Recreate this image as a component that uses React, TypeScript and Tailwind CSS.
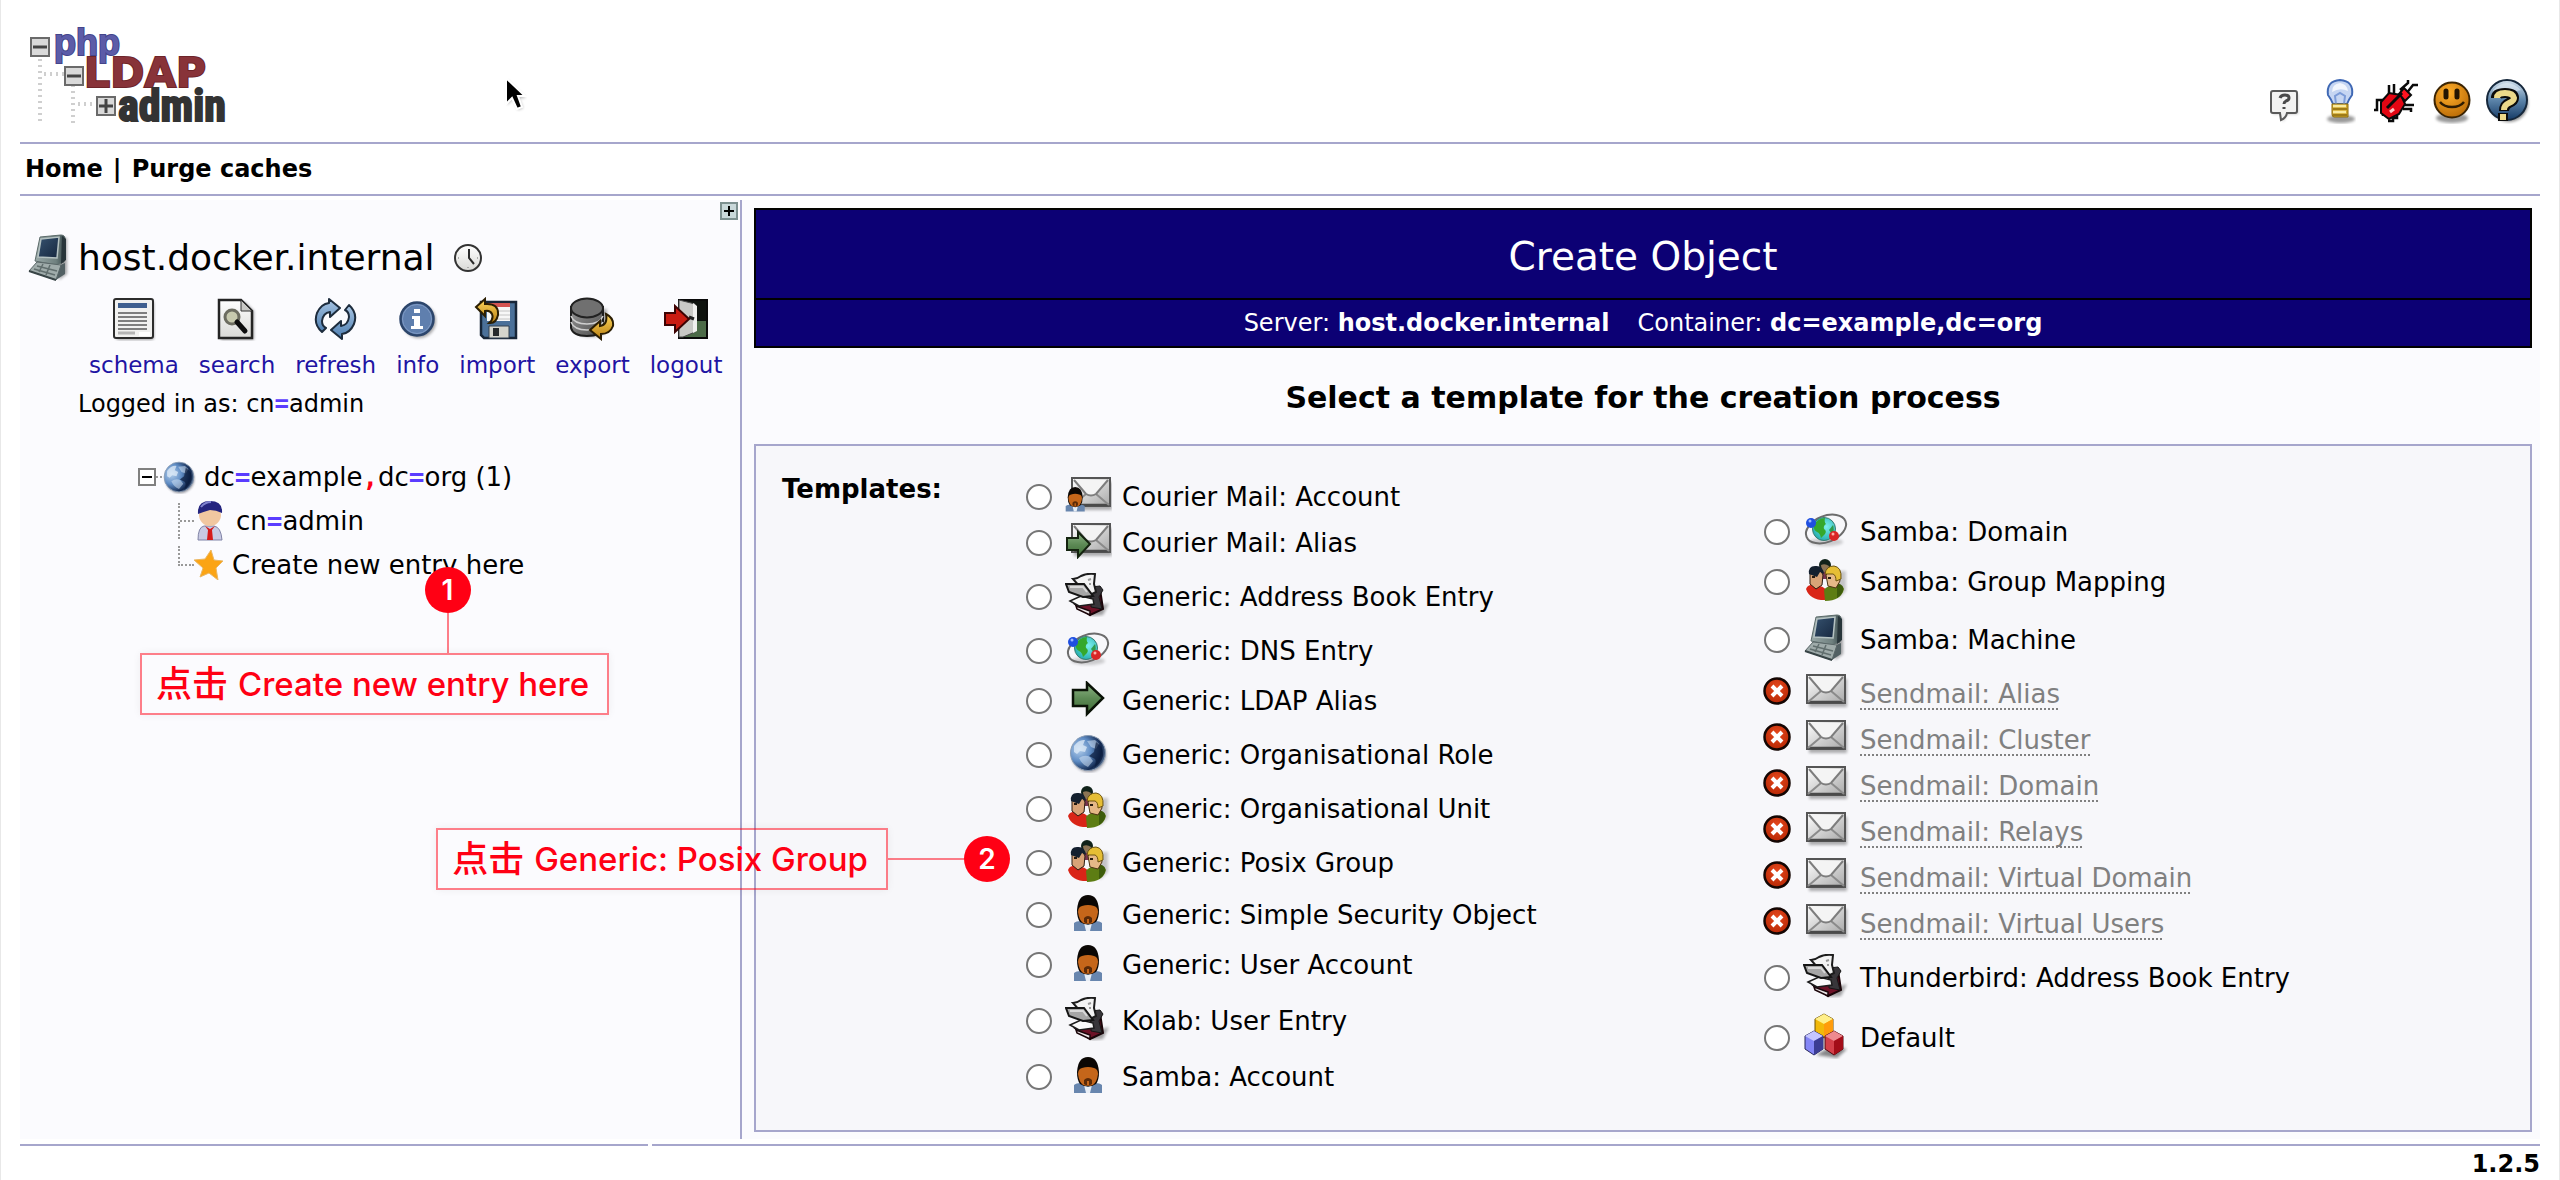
import type { ReactNode } from "react";

function Defs() {
  return (
    <svg width="0" height="0" className="absolute" aria-hidden="true">
      <defs>
        <linearGradient id="mailBody" x1="0" y1="0" x2="1" y2="1">
          <stop offset="0" stopColor="#fff" />
          <stop offset="1" stopColor="#a8a8a8" />
        </linearGradient>
        <linearGradient id="green" x1="0" y1="0" x2="0" y2="1">
          <stop offset="0" stopColor="#8fb586" />
          <stop offset="0.5" stopColor="#5d8a55" />
          <stop offset="1" stopColor="#3d6b35" />
        </linearGradient>
        <radialGradient id="earth" cx="0.25" cy="0.4" r="0.85">
          <stop offset="0" stopColor="#b4cfec" />
          <stop offset="0.4" stopColor="#5f8cc4" />
          <stop offset="0.75" stopColor="#12284f" />
          <stop offset="1" stopColor="#7f9ab8" />
        </radialGradient>
        <radialGradient id="teal" cx="0.6" cy="0.4" r="0.7">
          <stop offset="0" stopColor="#7df0ee" />
          <stop offset="1" stopColor="#1ba7a8" />
        </radialGradient>
        <radialGradient id="redDot" cx="0.5" cy="0.35" r="0.65">
          <stop offset="0" stopColor="#e5481c" />
          <stop offset="1" stopColor="#b82805" />
        </radialGradient>
        <linearGradient id="screen" x1="0" y1="0" x2="1" y2="1">
          <stop offset="0" stopColor="#36526f" />
          <stop offset="1" stopColor="#16273f" />
        </linearGradient>
        <linearGradient id="metal" x1="0" y1="0" x2="1" y2="0">
          <stop offset="0" stopColor="#9aa9a8" />
          <stop offset="0.7" stopColor="#6f807f" />
          <stop offset="1" stopColor="#37474a" />
        </linearGradient>
        <linearGradient id="blueArrow" x1="0" y1="0" x2="0" y2="1">
          <stop offset="0" stopColor="#a9c6e4" />
          <stop offset="1" stopColor="#4c7db0" />
        </linearGradient>
        <linearGradient id="gold" x1="0" y1="0" x2="0" y2="1">
          <stop offset="0" stopColor="#ffd75e" />
          <stop offset="1" stopColor="#b97f10" />
        </linearGradient>
        <linearGradient id="paper" x1="0" y1="0" x2="0" y2="1">
          <stop offset="0" stopColor="#ffffff" />
          <stop offset="1" stopColor="#d9d9d6" />
        </linearGradient>
        <radialGradient id="smile" cx="0.4" cy="0.3" r="0.75">
          <stop offset="0" stopColor="#ffae2a" />
          <stop offset="1" stopColor="#b96a06" />
        </radialGradient>
        <linearGradient id="helpBlue" x1="0" y1="0" x2="0" y2="1">
          <stop offset="0" stopColor="#d4e2ee" />
          <stop offset="0.5" stopColor="#5d85aa" />
          <stop offset="1" stopColor="#153a66" />
        </linearGradient>
        <linearGradient id="disk" x1="0" y1="0" x2="1" y2="1">
          <stop offset="0" stopColor="#9a9a9a" />
          <stop offset="1" stopColor="#4b4b4b" />
        </linearGradient>
        <filter id="soft" x="-30%" y="-30%" width="160%" height="160%">
          <feGaussianBlur stdDeviation="1.5" />
        </filter>
      </defs>
    </svg>
  );
}

type SvgProps = { w: number; h: number; children: ReactNode };
const Svg = ({ w, h, children }: SvgProps) => (
  <svg width={w} height={h} viewBox={`0 0 ${w} ${h}`} className="shrink-0" aria-hidden="true">
    {children}
  </svg>
);

const Envelope = ({ x }: { x: number }) => (
  <g transform={`translate(${x} 0)`}>
    <rect x="3" y="5" width="38" height="28" fill="#000" opacity="0.3" filter="url(#soft)" />
    <rect x="1" y="1" width="38" height="28" fill="url(#mailBody)" stroke="#555" strokeWidth="2" />
    <path d="M2 28h36" stroke="#4a4a4a" strokeWidth="2.5" />
    <path d="M2 28 15 17M38 28 25 17" stroke="#8b8b8b" strokeWidth="2" />
    <path d="M3 3 15 17q5 3 10 0L37 3" fill="#f4f4f4" stroke="#7d7d7d" strokeWidth="2" />
  </g>
);

const MailIcon = () => (
  <Svg w={48} h={36}>
    <Envelope x={4} />
  </Svg>
);

const Person = () => (
  <>
    <path d="M1 36v-8q2-2 7-2h14q5 0 7 2v8z" fill="#6886ae" />
    <path d="m11 28 4 2 4-2-2 8h-4z" fill="#e8eef6" />
    <path d="M4 15Q5 0 15 0t11 15q0 8-3 12-8 5-16 0-3-4-3-12z" fill="#0b0704" />
    <path d="M5 17q0-5 4-6 6-2 12 0 4 1 4 6-1 8-5 11-5 2-10 0-4-3-5-11z" fill="#c5661a" />
    <path d="M11 27v-4q4-4 8 0v4q-4 3-8 0z" fill="#5a2a08" />
    <path d="M14 24h2v4h-2z" fill="#c5661a" />
  </>
);

const UserIcon = () => (
  <Svg w={30} h={36}>
    <Person />
  </Svg>
);

const MailUserIcon = () => (
  <Svg w={48} h={36}>
    <Envelope x={7} />
    <g transform="translate(1 10) scale(0.68)">
      <Person />
    </g>
  </Svg>
);

const arrowPath = "M2 9h14V2l16 15-16 16v-8H2z";

const MailArrowIcon = () => (
  <Svg w={48} h={36}>
    <Envelope x={7} />
    <path d="M3 15h11V9l12 12-12 13v-7H3z" fill="url(#green)" stroke="#14230f" strokeWidth="2" />
  </Svg>
);

const ArrowIcon = () => (
  <Svg w={34} h={36}>
    <path d={arrowPath} fill="url(#green)" stroke="#0a1206" strokeWidth="2.5" />
  </Svg>
);

const BookIcon = () => (
  <Svg w={46} h={44}>
    <path d="M26 36l18-6-6 12-12 1z" fill="#000" opacity="0.35" filter="url(#soft)" />
    <path d="M10 31l16-6 9-9 3 20-13 6z" fill="#6d1227" stroke="#1a0509" strokeWidth="2" />
    <path d="M11 33l14 5v4L12 36z" fill="#e9e3e4" stroke="#1a0509" strokeWidth="1.5" />
    <path d="M26 14l9-1 3 4-4 7 3 12-11-2z" fill="#38363a" stroke="#151515" />
    <path d="M5 28 16 23l12 3 1 5-15 2z" fill="#fafafa" stroke="#1c1c1c" strokeWidth="1.5" />
    <path d="M8 6q4 0 8-3 6-3 14-2l-1 10 2 8-8 4z" fill="#f3f3f3" stroke="#1c1c1c" strokeWidth="2" />
    <path d="m23 7 3-1M24 11h2" stroke="#999" strokeWidth="2" />
    <path d="M1 11h18l9 12-10 1-14-5z" fill="#a6a6a6" stroke="#151515" strokeWidth="2" />
    <path d="M5 14h13l4 5" fill="none" stroke="#d8d8d8" strokeWidth="2" />
  </Svg>
);

const OrbitIcon = () => (
  <Svg w={46} h={36}>
    <ellipse cx="23" cy="30" rx="17" ry="4" fill="#000" opacity="0.18" filter="url(#soft)" />
    <ellipse cx="23" cy="17" rx="21" ry="13" transform="rotate(-22 23 17)" fill="none" stroke="#6c6c6c" strokeWidth="2" />
    <circle cx="21" cy="17" r="11.5" fill="url(#teal)" stroke="#3a7a70" />
    <path d="M11 13q4-7 11-7-1 4 1 6-3 2-2 5 3 2 1 5l-4 4q-1-5-4-6-4-2-3-7z" fill="#35a82c" />
    <path d="M30 13q2 5-1 9l-3-4z" fill="#2f9c4b" />
    <circle cx="8" cy="11" r="5" fill="#1f4fe0" />
    <circle cx="7" cy="9" r="1.5" fill="#9db8ff" />
    <circle cx="31" cy="24" r="5" fill="#d92626" />
    <circle cx="30" cy="22" r="1.5" fill="#ffb0a8" />
  </Svg>
);

const GlobeIcon = ({ size = 40 }: { size?: number }) => (
  <svg width={size} height={size} viewBox="0 0 40 40" className="shrink-0" aria-hidden="true">
    <circle cx="21" cy="22" r="17" fill="#223" opacity="0.45" filter="url(#soft)" />
    <circle cx="20" cy="20" r="17.5" fill="url(#earth)" stroke="#8b9db3" />
    <path d="M6 13q5-7 11-6l-2 5 4 2-2 5-5-1-3 3-3-2z" fill="#e0ecf8" opacity="0.75" />
    <path d="M11 25q6-4 11-1l3 4-5 6q-6-2-9-9zM19 8l8-1 4 4-3 5-5-2z" fill="#cfe0f2" opacity="0.55" />
    <path d="M28 9q8 5 7 14-2 8-9 12 3-6 1-9l-6-3 5-4z" fill="#0a1b3c" opacity="0.7" />
  </svg>
);

const GroupIcon = () => (
  <Svg w={44} h={42}>
    <path d="M30 12h12v20l-8 8z" fill="#000" opacity="0.2" filter="url(#soft)" />
    <circle cx="21" cy="6" r="6" fill="#10221a" />
    <path d="M14 14q7-10 14 0v6H14z" fill="#7b3552" />
    <path d="M17 6q4-2 8 1l-1 6h-6z" fill="#8b7455" />
    <path d="M2 30q2-5 9-4 9 1 11 5l1 10Q6 42 2 30z" fill="#d92517" />
    <path d="M40 30q-2-5-9-4-9 1-11 5l1 11q16 0 19-12z" fill="#5d7d13" />
    <path d="M33 24q8 2 6 8-2 5-6 7z" fill="#3d5c0b" />
    <path d="M6 12q10-5 13 4l-1 10-6 4-6-5z" fill="#d8a377" stroke="#2b1c12" />
    <path d="M5 15q-1-8 6-8 8-1 9 8l-4-2-3 5z" fill="#14202f" />
    <path d="M22 16q5-7 13 0l1 6-4 7-8-2z" fill="#e5b887" stroke="#4a3312" />
    <path d="M21 15q1-8 9-8 8 1 7 13l-5 2q0-6-3-7z" fill="#e6be35" stroke="#6b5310" />
    <path d="M8 18h3M24 19h3" stroke="#241a10" strokeWidth="2" />
  </Svg>
);

const ComputerIcon = () => (
  <Svg w={44} h={48}>
    <path d="M33 4h6v36l-8 6z" fill="#000" opacity="0.35" filter="url(#soft)" />
    <path d="M12 3 33 1q5 0 4 6l-1 21-8 3-21-4z" fill="url(#metal)" stroke="#5c6b6a" />
    <path d="m34 2 4 3v21l-5 4z" fill="#28353a" />
    <path d="m13 5 18-2-2 21-19-1z" fill="url(#screen)" stroke="#b5c2c2" strokeWidth="1.5" />
    <path d="m8 29 22 3 7-3v11l-9 6-8-2z" fill="#526063" />
    <path d="m1 37 8-9 24 3-5 15z" fill="#9fabaa" stroke="#596667" />
    <path d="m6 35 21 6M9 32l20 5M15 30l-4 8M22 31l-4 10" stroke="#616e6e" strokeWidth="1.5" />
    <path d="m1 37 27 9" stroke="#384446" strokeWidth="2" />
  </Svg>
);

const CubesIcon = () => (
  <Svg w={44} h={46}>
    <path d="M12 42 26 34l17 2-10 9z" fill="#000" opacity="0.45" filter="url(#soft)" />
    <path d="m20 1 9 5v13l-9 6-9-6V6z" fill="#f2b90a" stroke="#6f5304" />
    <path d="m20 1 9 5-9 5-9-5z" fill="#ffef8a" />
    <path d="M20 11v14l9-6V6z" fill="#ff9c0c" />
    <path d="m10 18 9 5v13l-9 6-9-6V23z" fill="#8486f6" stroke="#26265a" />
    <path d="m10 18 9 5-9 5-9-5z" fill="#c5c6ff" />
    <path d="M10 28v14l9-6V23z" fill="#3c3d94" />
    <path d="m30 18 9 5v13l-9 6-9-6V23z" fill="#d4404a" stroke="#4d070d" />
    <path d="m30 18 9 5-9 5-9-5z" fill="#ee8a8f" />
    <path d="M30 28v14l9-6V23z" fill="#a30d18" />
  </Svg>
);

const ErrorIcon = () => (
  <Svg w={28} h={28}>
    <circle cx="14" cy="14" r="12.5" fill="url(#redDot)" stroke="#140603" strokeWidth="2.5" />
    <path d="m9 9 10 10m0-10-10 10" stroke="#fff" strokeWidth="4" />
  </Svg>
);

const SchemaIcon = () => (
  <Svg w={44} h={44}>
    <rect x="4" y="4" width="38" height="39" rx="3" fill="#000" opacity="0.35" filter="url(#soft)" />
    <rect x="2" y="2" width="39" height="39" rx="2" fill="#f1f1f0" stroke="#2c2c2c" strokeWidth="2" />
    <rect x="6" y="6" width="29" height="5" fill="#3f5f8f" />
    <path d="M6 16h29M6 20h29M6 24h29M6 28h29M6 32h29" stroke="#7e7e7e" strokeWidth="2" />
    <path d="M6 36h17" stroke="#b5b5b5" strokeWidth="3" />
    <path d="M27 37h11" stroke="#fff" strokeWidth="4" />
  </Svg>
);

const SearchIcon = () => (
  <Svg w={42} h={44}>
    <path d="M5 5h24l9 9v29H5z" fill="#000" opacity="0.35" filter="url(#soft)" />
    <path d="M3 3h22l11 11v27H3z" fill="url(#paper)" stroke="#242424" strokeWidth="2.5" />
    <path d="M25 3v11h11z" fill="#c9c9c6" stroke="#333" />
    <circle cx="16" cy="20" r="7" fill="#c7c9ae" stroke="#6c6c60" strokeWidth="3" />
    <path d="m21 25 8 9" stroke="#0d0d0d" strokeWidth="5" strokeLinecap="round" />
  </Svg>
);

const RefreshIcon = () => (
  <Svg w={44} h={44}>
    <g fill="url(#blueArrow)" stroke="#1d2c3d" strokeWidth="2" strokeLinejoin="round">
      <path d="M8 35Q-1 27 3 16 7 7 15 6V2l11 9-10 9v-5q-7 1-8 9 0 5 4 7z" />
      <path d="M35 8q9 8 5 19-4 9-12 10v5l-11-9 10-9v5q7-1 8-9 0-5-4-7z" />
    </g>
  </Svg>
);

const InfoIcon = () => (
  <Svg w={40} h={44}>
    <circle cx="21" cy="24" r="17" fill="#000" opacity="0.35" filter="url(#soft)" />
    <circle cx="19" cy="22" r="16.5" fill="#5f7fae" stroke="#2c456b" strokeWidth="2.5" />
    <circle cx="19" cy="22" r="14.5" fill="none" stroke="#7f9ac4" />
    <path d="M16 12h6v4h-6zM14 19h8v10h3v3H13v-3h3v-7h-2z" fill="#fff" />
  </Svg>
);

const ImportIcon = () => (
  <Svg w={46} h={44}>
    <path d="M7 5h35v36H10l-3-3z" fill="#4a7099" stroke="#162538" strokeWidth="2.5" />
    <path d="M13 6h23v18H13z" fill="#f7f7f7" />
    <path d="M13 6h23v4H13z" fill="#d45452" />
    <path d="M17 14h19M17 18h19M17 22h19" stroke="#c4c4c4" />
    <path d="M15 29h20v12H15z" fill="#d5d5cd" stroke="#33414f" />
    <path d="M19 31h6v8h-6z" fill="#26292b" />
    <path d="m2 10 9-8v5q14-1 13 11-2 9-9 8 5-4 3-9-2-4-7-3v5z" fill="url(#gold)" stroke="#2b1e03" strokeWidth="2" />
  </Svg>
);

const ExportIcon = () => (
  <Svg w={46} h={44}>
    <path d="M6 12v20q2 8 16 8t16-8V12z" fill="#333" opacity="0.4" filter="url(#soft)" />
    <path d="M2 10v21q2 8 16 8t16-8V10z" fill="url(#disk)" stroke="#1d1d1d" strokeWidth="2" />
    <path d="M2 19q3 8 16 8t16-8M2 25q3 8 16 8t16-8" fill="none" stroke="#cfcfcf" strokeWidth="1.5" />
    <ellipse cx="18" cy="11" rx="16" ry="9.5" fill="#707070" stroke="#222" strokeWidth="2" />
    <path d="m21 33 10-9v5q8-1 6-12 8 4 7 12-3 8-12 8v5z" fill="url(#gold)" stroke="#2b1e03" strokeWidth="2" />
  </Svg>
);

const LogoutIcon = () => (
  <Svg w={46} h={44}>
    <path d="M16 3h28v38H16z" fill="#0e120e" stroke="#0a0a0a" strokeWidth="2" />
    <path d="M34 24h9v16H20z" fill="#4c6b48" />
    <path d="m16 3 16 4v28l-12 5h-4z" fill="#c9c9c6" stroke="#4a4a4a" />
    <path d="m30 6 4 3v25l-4 2z" fill="#f0f0ee" />
    <path d="m26 20 5 2" stroke="#222" strokeWidth="3" />
    <path d="M2 16h10V9l14 13-14 13v-7H2z" fill="#c91c12" stroke="#3d0303" strokeWidth="2" />
  </Svg>
);

const ClockIcon = () => (
  <Svg w={30} h={30}>
    <circle cx="15" cy="15" r="13" fill="url(#paper)" stroke="#333" strokeWidth="2" />
    <path d="M16 6v9l5 6" fill="none" stroke="#2a2a2a" strokeWidth="2" />
    <path d="M15 24v1M5 15h1M24 15h1" stroke="#999" strokeWidth="1.5" />
  </Svg>
);

const NoteIcon = () => (
  <Svg w={32} h={36}>
    <path d="M5 6h25v20H19l-4 8-2-8H5z" fill="#000" opacity="0.25" filter="url(#soft)" />
    <path d="M5 3h22q2 0 2 2v18q0 2-2 2h-8q-1 5-6 7l-1-7H5q-2 0-2-2V5q0-2 2-2z" fill="#f2f2f1" stroke="#5a5a5a" strokeWidth="2" />
    <path d="M12 10q1-3 5-3t4 3q0 2-3 3-2 1-2 3M16 19v2" fill="none" stroke="#4a4a4a" strokeWidth="3" />
  </Svg>
);

const BulbIcon = () => (
  <Svg w={32} h={46}>
    <ellipse cx="17" cy="41" rx="14" ry="4" fill="#000" opacity="0.4" filter="url(#soft)" />
    <path d="M9 26q-2-5-5-9Q2 3 16 2q14 1 12 15-3 4-5 9z" fill="#c6d6f2" stroke="#3f68b4" strokeWidth="2" />
    <path d="M8 14q0-8 8-9 7 1 8 8-8-4-16 1z" fill="#f2f6fd" />
    <path d="m12 26-1-8 5-3 5 3-1 8" fill="none" stroke="#7c9cd8" strokeWidth="2" />
    <path d="M8 26h16v13H10q-2 0-2-3z" fill="#d2a92e" stroke="#8b6a0a" />
    <path d="M9 28h13M9 34h13" stroke="#f9eba0" strokeWidth="2.5" />
    <path d="M9 31h14M9 37h14" stroke="#8d6c10" strokeWidth="1.5" />
  </Svg>
);

const BugIcon = () => (
  <Svg w={46} h={46}>
    <g fill="none" stroke="#0a0a0a" strokeWidth="2.5">
      <path d="M10 22H4v10H1M16 18V7M21 16V6M27 12l8-7v-3M33 16l7-9h5M32 27h9M30 31h8v3M24 35v5h-4v3h-5M10 32v6" />
    </g>
    <path d="m8 24 8-9 12 2 4 9-6 10-10 5-8-6z" fill="#e30613" stroke="#0a0a0a" strokeWidth="2" />
    <path d="m26 16 5-6 7 7-6 6z" fill="#ff1320" stroke="#0a0a0a" strokeWidth="2" />
    <path d="m14 30 15-15" stroke="#0a0a0a" strokeWidth="3" />
    <path d="m17 34 4-3" stroke="#ffc8c8" strokeWidth="3" />
  </Svg>
);

const SmileyIcon = () => (
  <Svg w={40} h={44}>
    <ellipse cx="20" cy="38" rx="16" ry="5" fill="#000" opacity="0.4" filter="url(#soft)" />
    <circle cx="20" cy="20" r="17.5" fill="url(#smile)" stroke="#3b2403" strokeWidth="2" />
    <path d="M14 11v6M25 11v6" stroke="#241502" strokeWidth="5" strokeLinecap="round" />
    <path d="M8 22q4 5 12 5t12-5" fill="none" stroke="#2e1c03" strokeWidth="2.5" />
  </Svg>
);

const HelpIcon = () => (
  <Svg w={46} h={46}>
    <circle cx="24" cy="25" r="19" fill="#000" opacity="0.45" filter="url(#soft)" />
    <circle cx="22" cy="22" r="20" fill="url(#helpBlue)" stroke="#15273b" strokeWidth="2" />
    <path d="M8 12Q22-2 36 12l-8 2Q18 9 8 18z" fill="#eef5fb" opacity="0.5" />
    <path d="M11 20q0-5 9-5t9 5q0 3-5 5-5 2-5 8M18 35v8" fill="none" stroke="#0b0b0b" strokeWidth="10" />
    <path d="M12 20q0-5 8-5t9 5q0 3-5 5-5 2-5 7M18 36v6" fill="none" stroke="#ecd98a" strokeWidth="6" />
  </Svg>
);

const AdminIcon = () => (
  <Svg w={28} h={42}>
    <path d="M2 40q0-13 6-14h10q7 1 8 14z" fill="#c9cbe4" stroke="#7f82a5" />
    <path d="m9 26 5 3 5-3-3 4 1 10h-6l1-10z" fill="#d51b1b" />
    <circle cx="14" cy="15" r="11" fill="#f1c7a0" />
    <path d="M2 14Q1 1 14 1t12 12q-6-3-12-3-7 2-12 4z" fill="#24247f" />
    <path d="M5 7q4-5 10-5" stroke="#7f82cf" strokeWidth="2" fill="none" />
  </Svg>
);

const StarIcon = () => (
  <Svg w={30} h={30}>
    <path d="m17 0 3 10 9 1-7 7 2 12-9-7-9 4 3-9-9-8 11-1z" fill="#fba414" stroke="#e9b765" />
  </Svg>
);

const Cursor = () => (
  <svg width="24" height="38" viewBox="0 0 24 38" className="absolute top-[75px] left-[502px]" aria-hidden="true">
    <path d="M4 5v25l6-6 5 11 5-2-4-10h7z" fill="#000" opacity="0.3" filter="url(#soft)" />
    <path d="M3 3v26l6-6 5 11 5-2-4-11h7z" fill="#000" stroke="#fff" strokeWidth="2" />
  </svg>
);

function TreeBox({ x, y, plus }: { x: number; y: number; plus?: boolean }) {
  return (
    <g transform={`translate(${x} ${y})`}>
      <rect x="1" y="1" width="18" height="18" fill="#d9d9d9" stroke="#6a6a6a" strokeWidth="2" />
      <path d="M3 10h14" stroke="#444" strokeWidth="3" />
      {plus && <path d="M10 3v14" stroke="#444" strokeWidth="3" />}
    </g>
  );
}

function Logo() {
  return (
    <svg width="202" height="100" viewBox="28 25 202 100" className="overflow-visible" role="img" aria-label="phpLDAPadmin">
      <g stroke="#cfcfcf" strokeWidth="4" strokeDasharray="2 4" fill="none">
        <path d="M40 60v64M73 86v38" />
        <path d="M44 75h20M78 105h18" />
      </g>
      <TreeBox x={30} y={38} />
      <TreeBox x={64} y={67} />
      <TreeBox x={96} y={97} plus />
      <text x="54" y="56" fontSize="36" fontWeight="700" fontFamily="Liberation Sans" fill="#5c5ca8" stroke="#44448a" strokeWidth="2" paintOrder="stroke">php</text>
      <text x="84" y="88" fontSize="41" fontWeight="700" fontFamily="DejaVu Sans" fill="#883339" stroke="#6d2429" strokeWidth="2" paintOrder="stroke">LDAP</text>
      <text x="118" y="122" fontSize="44" fontWeight="700" fontFamily="Liberation Sans Narrow, Roboto Condensed, DejaVu Sans Condensed" fill="#333" stroke="#333" strokeWidth="2">admin</text>
    </svg>
  );
}

type Template = { name: string; icon: () => ReactNode; h: string; off?: boolean };

const H46 = "h-[46px]";
const H50 = "h-[50px]";
const H54 = "h-[54px]";
const H58 = "h-[58px]";
const H62 = "h-[62px]";

const leftTemplates: Template[] = [
  { name: "Courier Mail: Account", icon: MailUserIcon, h: H46 },
  { name: "Courier Mail: Alias", icon: MailArrowIcon, h: H46 },
  { name: "Generic: Address Book Entry", icon: BookIcon, h: H62 },
  { name: "Generic: DNS Entry", icon: OrbitIcon, h: H46 },
  { name: "Generic: LDAP Alias", icon: ArrowIcon, h: H54 },
  { name: "Generic: Organisational Role", icon: GlobeIcon, h: H54 },
  { name: "Generic: Organisational Unit", icon: GroupIcon, h: H54 },
  { name: "Generic: Posix Group", icon: GroupIcon, h: H54 },
  { name: "Generic: Simple Security Object", icon: UserIcon, h: H50 },
  { name: "Generic: User Account", icon: UserIcon, h: H50 },
  { name: "Kolab: User Entry", icon: BookIcon, h: H62 },
  { name: "Samba: Account", icon: UserIcon, h: H50 },
];

const rightTemplates: Template[] = [
  { name: "Samba: Domain", icon: OrbitIcon, h: H46 },
  { name: "Samba: Group Mapping", icon: GroupIcon, h: H54 },
  { name: "Samba: Machine", icon: ComputerIcon, h: H62 },
  { name: "Sendmail: Alias", icon: MailIcon, h: H46, off: true },
  { name: "Sendmail: Cluster", icon: MailIcon, h: H46, off: true },
  { name: "Sendmail: Domain", icon: MailIcon, h: H46, off: true },
  { name: "Sendmail: Relays", icon: MailIcon, h: H46, off: true },
  { name: "Sendmail: Virtual Domain", icon: MailIcon, h: H46, off: true },
  { name: "Sendmail: Virtual Users", icon: MailIcon, h: H46, off: true },
  { name: "Thunderbird: Address Book Entry", icon: BookIcon, h: H62 },
  { name: "Default", icon: CubesIcon, h: H58 },
];

const actions = [
  { name: "schema", icon: SchemaIcon },
  { name: "search", icon: SearchIcon },
  { name: "refresh", icon: RefreshIcon },
  { name: "info", icon: InfoIcon },
  { name: "import", icon: ImportIcon },
  { name: "export", icon: ExportIcon },
  { name: "logout", icon: LogoutIcon },
];

const headerLinks = [
  { name: "Request feature", icon: NoteIcon },
  { name: "Hints", icon: BulbIcon },
  { name: "Report a bug", icon: BugIcon },
  { name: "Donate", icon: SmileyIcon },
  { name: "Help", icon: HelpIcon },
];

const Eq = () => <span className="font-['DejaVu_Sans_Mono',monospace] font-bold text-[#5a3cff]">=</span>;
const Comma = () => <span className="font-['DejaVu_Sans_Mono',monospace] font-bold text-[#ff0018]">,</span>;

function Note({ children }: { children: ReactNode }) {
  return (
    <div className="flex h-[62px] shrink-0 items-center border-2 border-[#ff0014]/50 pr-[18px] pl-[14px] font-['Inter','Noto_Sans_CJK_SC',sans-serif] text-[33px] leading-none font-medium whitespace-nowrap text-[#ff0014] shadow-[0_0_8px_rgba(0,0,0,0.06)]">
      <span className="mr-[10px] text-[36px]">点击</span>
      {children}
    </div>
  );
}

function Badge({ children }: { children: ReactNode }) {
  return (
    <span className="flex size-[46px] shrink-0 items-center justify-center rounded-full bg-[#ff0014] font-['Inter',sans-serif] text-[28px] leading-none font-semibold text-white">
      {children}
    </span>
  );
}

function TemplateRow({ t }: { t: Template }) {
  const Icon = t.icon;
  return (
    <div className="relative">
      {t.name === "Generic: Posix Group" && (
        <div className="absolute -top-2 right-full mr-4 flex items-center">
          <Note>Generic: Posix Group</Note>
          <span className="h-[2px] w-[76px] bg-[#ff0014]/50" />
          <Badge>2</Badge>
        </div>
      )}
      <label className={`flex items-center ${t.h}`}>
        {t.off ? (
          <span className="-mx-px shrink-0 pb-1.5">
            <ErrorIcon />
          </span>
        ) : (
          <input
            type="radio"
            name="template"
            className="size-[26px] shrink-0 appearance-none rounded-full border-2 border-[#767676] bg-white checked:border-[7px] checked:border-[#0075ff]"
          />
        )}
        <span className="mr-[10px] ml-3 flex w-12 shrink-0 justify-center pb-1">
          <Icon />
        </span>
        <span className={t.off ? "text-[#808080] underline decoration-dotted decoration-2 underline-offset-[5px]" : ""}>
          {t.name}
        </span>
      </label>
    </div>
  );
}

export default function App() {
  return (
    <div className="relative min-h-screen border-x border-[#e8e8e8] bg-white px-[19px] font-['DejaVu_Sans',Verdana,sans-serif] text-[26px] leading-[30px] text-black">
      <Defs />
      <Cursor />
      <header>
        <div className="flex h-[142px] items-end justify-between pr-2.5 pb-[18px] pl-2">
          <a href="#home">
            <Logo />
          </a>
          <nav className="flex items-end gap-3">
            {headerLinks.map(({ name, icon: Icon }) => (
              <a key={name} href="#tool" aria-label={name} className="flex w-11 justify-center">
                <Icon />
              </a>
            ))}
          </nav>
        </div>
        <nav className="flex h-[54px] items-center gap-[10px] border-y-2 border-[#a6a6cc] pl-[5px] text-[24px] font-bold">
          <a href="#home">Home</a>
          <span>|</span>
          <a href="#purge">Purge caches</a>
        </nav>
      </header>

      <div className="mt-1 flex">
        <aside className="w-[722px] shrink-0 border-r-2 border-[#a6a6cc] bg-[#fbfbfe]">
          <div className="flex justify-end px-0.5 pt-0.5">
            <button type="button" aria-label="Expand" className="flex size-[18px] items-center justify-center border-2 border-[#7d9090] bg-[#c9d8da]">
              <svg width="10" height="10" viewBox="0 0 10 10" aria-hidden="true">
                <path d="M5 0v10M0 5h10" stroke="#000" strokeWidth="2" />
              </svg>
            </button>
          </div>
          <h1 className="mt-[14px] flex h-12 items-center pl-2 text-[36px] leading-none">
            <ComputerIcon />
            <span className="mr-[18px] ml-1.5">host.docker.internal</span>
            <ClockIcon />
          </h1>
          <nav className="mt-[15px] flex gap-5 pl-[69px] text-[23px] leading-7 text-[#1f14a3]">
            {actions.map(({ name, icon: Icon }) => (
              <a key={name} href="#action" className="flex flex-col items-center gap-2.5">
                <Icon />
                {name}
              </a>
            ))}
          </nav>
          <p className="mt-2.5 pl-[58px] text-[24px]">
            Logged in as: cn
            <Eq />
            admin
          </p>

          <ul className="mt-9 pl-[118px]">
            <li className="flex h-11 items-center">
              <button type="button" aria-label="Collapse" className="flex size-[18px] items-center justify-center border-2 border-[#808080] bg-white">
                <span className="h-[2px] w-[10px] bg-black" />
              </button>
              <span className="w-1.5 border-t-2 border-dotted border-[#999]" />
              <GlobeIcon size={34} />
              <a href="#entry" className="ml-2">
                dc
                <Eq />
                example
                <Comma />
                dc
                <Eq />
                org (1)
              </a>
            </li>
            <li className="flex h-11 items-center pl-10">
              <span className="flex h-9 w-4 items-center border-l-2 border-dotted border-[#999]">
                <span className="w-full border-t-2 border-dotted border-[#999]" />
              </span>
              <span className="ml-0.5">
                <AdminIcon />
              </span>
              <a href="#entry" className="ml-3">
                cn
                <Eq />
                admin
              </a>
            </li>
            <li className="relative flex h-11 items-center pl-10">
              <span className="mb-[18px] h-5 w-4 border-b-2 border-l-2 border-dotted border-[#999]" />
              <StarIcon />
              <a href="#create" className="ml-2">
                Create new entry here
              </a>
              <div className="absolute top-6 left-0.5 flex flex-col items-center">
                <div className="ml-[146px] flex flex-col items-center">
                  <Badge>1</Badge>
                  <span className="h-10 w-[2px] bg-[#ff0014]/50" />
                </div>
                <Note>Create new entry here</Note>
              </div>
            </li>
          </ul>
        </aside>

        <main className="min-w-0 flex-1 bg-[#fbfbfe] pt-2 pr-2 pb-[7px] pl-3">
          <div className="border-2 border-black bg-[#0c0074] text-center text-white">
            <h2 className="flex h-[90px] items-center justify-center border-b-2 border-black pt-1 text-[39px] leading-none">Create Object</h2>
            <p className="flex h-[46px] items-center justify-center gap-7 text-[24px]">
              <span>
                Server: <b>host.docker.internal</b>
              </span>
              <span>
                Container: <b>dc=example,dc=org</b>
              </span>
            </p>
          </div>
          <h3 className="flex h-24 items-center justify-center pt-1 text-[30px] font-bold">Select a template for the creation process</h3>
          <form className="grid grid-cols-[244px_1fr_1fr] border-2 border-[#a6a6cc] bg-[#f7f7fa] py-7 pr-7 pl-[26px]">
            <div className="font-bold">Templates:</div>
            <div>
              {leftTemplates.map((t) => (
                <TemplateRow key={t.name} t={t} />
              ))}
            </div>
            <div className="flex flex-col justify-center">
              {rightTemplates.map((t) => (
                <TemplateRow key={t.name} t={t} />
              ))}
            </div>
          </form>
        </main>
      </div>

      <footer className="pt-[5px]">
        <div className="flex gap-1">
          <span className="h-[2px] w-[628px] bg-[#a6a6cc]" />
          <span className="h-[2px] flex-1 bg-[#a6a6cc]" />
        </div>
        <p className="pt-1 text-right text-[24px] leading-7 font-bold">1.2.5</p>
      </footer>
    </div>
  );
}
